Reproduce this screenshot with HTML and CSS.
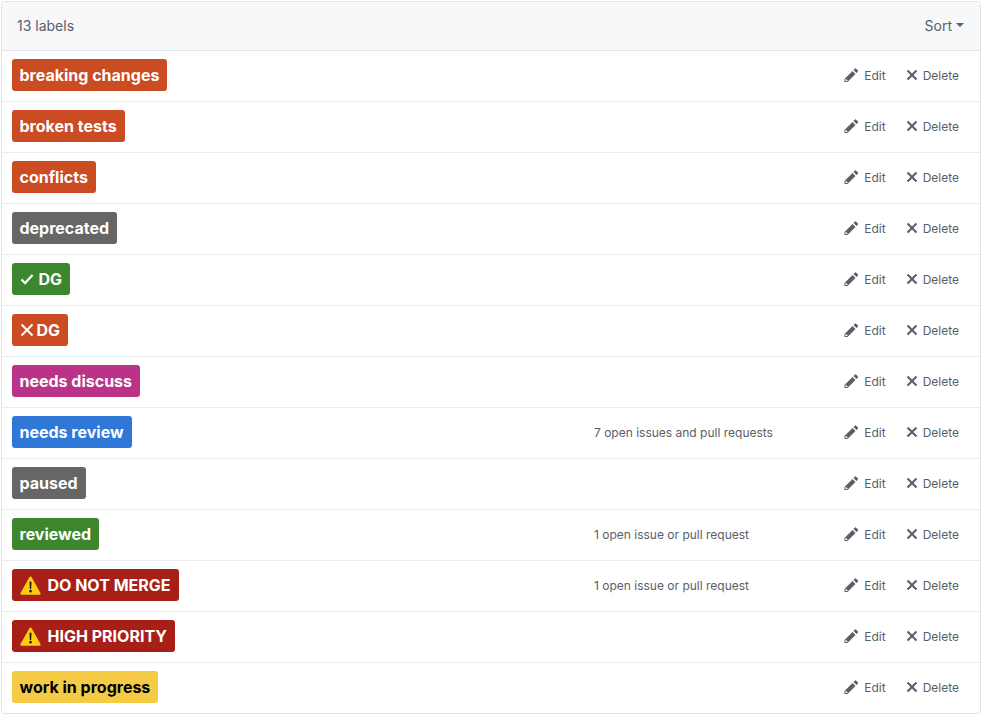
FILE: index.html
```html
<!DOCTYPE html>
<html lang="en">
<head>
    <meta charset="UTF-8">
    <title>Labels</title>
    <link rel="stylesheet" href="styles.css">
</head>
<body>
<svg class="defs" aria-hidden="true">
    <symbol id="pencil" viewBox="0 0 14 16"><path fill-rule="evenodd" d="M0 12v3h3l8-8-3-3-8 8zm3 2H1v-2h1v1h1v1zm10.3-9.3L12 6 9 3l1.3-1.3a.996.996 0 0 1 1.41 0l1.59 1.59c.39.39.39 1.02 0 1.41z"/></symbol>
    <symbol id="cross" viewBox="0 0 12 16"><path fill-rule="evenodd" d="M7.48 8l3.75 3.75-1.48 1.48L6 9.48l-3.75 3.75-1.48-1.48L4.52 8 .77 4.25l1.48-1.48L6 6.52l3.75-3.75 1.48 1.48L7.48 8z"/></symbol>
    <symbol id="warning" viewBox="0 0 22 20"><path fill="#ffcd0f" d="M11 .6c.5 0 .9.3 1.2.8l9.3 16.4c.5.9-.1 1.9-1.1 1.9H1.6c-1 0-1.6-1-1.1-1.9L9.8 1.4c.3-.5.7-.8 1.2-.8z"/><path fill="#1b1b1b" d="M9.9 6h2.2l-.4 7.6h-1.4zM11 14.6a1.4 1.4 0 1 1 0 2.8 1.4 1.4 0 0 1 0-2.8z"/></symbol>
</svg>
<div class="box">
    <div class="box-header">
        <span>13 labels</span>
        <span class="sort">Sort <i class="caret"></i></span>
    </div>
    <div class="row">
        <div><span class="label orange">breaking changes</span></div>
        <div class="issues"></div>
        <div class="actions">
            <a><svg class="ico-edit"><use href="#pencil"/></svg>Edit</a>
            <a><svg class="ico-del"><use href="#cross"/></svg>Delete</a>
        </div>
    </div>
    <div class="row">
        <div><span class="label orange">broken tests</span></div>
        <div class="issues"></div>
        <div class="actions">
            <a><svg class="ico-edit"><use href="#pencil"/></svg>Edit</a>
            <a><svg class="ico-del"><use href="#cross"/></svg>Delete</a>
        </div>
    </div>
    <div class="row">
        <div><span class="label orange">conflicts</span></div>
        <div class="issues"></div>
        <div class="actions">
            <a><svg class="ico-edit"><use href="#pencil"/></svg>Edit</a>
            <a><svg class="ico-del"><use href="#cross"/></svg>Delete</a>
        </div>
    </div>
    <div class="row">
        <div><span class="label grey">deprecated</span></div>
        <div class="issues"></div>
        <div class="actions">
            <a><svg class="ico-edit"><use href="#pencil"/></svg>Edit</a>
            <a><svg class="ico-del"><use href="#cross"/></svg>Delete</a>
        </div>
    </div>
    <div class="row">
        <div><span class="label green"><svg class="mark-check" viewBox="0 0 14 12"><path d="M1.5 6.5l3.6 3.6 7.4-8" fill="none" stroke="#fff" stroke-width="2.2"/></svg>DG</span></div>
        <div class="issues"></div>
        <div class="actions">
            <a><svg class="ico-edit"><use href="#pencil"/></svg>Edit</a>
            <a><svg class="ico-del"><use href="#cross"/></svg>Delete</a>
        </div>
    </div>
    <div class="row">
        <div><span class="label orange"><svg class="mark-cross" viewBox="0 0 14 14"><path d="M1.5 1.5l11 11M12.5 1.5l-11 11" fill="none" stroke="#fff" stroke-width="2"/></svg>DG</span></div>
        <div class="issues"></div>
        <div class="actions">
            <a><svg class="ico-edit"><use href="#pencil"/></svg>Edit</a>
            <a><svg class="ico-del"><use href="#cross"/></svg>Delete</a>
        </div>
    </div>
    <div class="row">
        <div><span class="label magenta">needs discuss</span></div>
        <div class="issues"></div>
        <div class="actions">
            <a><svg class="ico-edit"><use href="#pencil"/></svg>Edit</a>
            <a><svg class="ico-del"><use href="#cross"/></svg>Delete</a>
        </div>
    </div>
    <div class="row">
        <div><span class="label blue">needs review</span></div>
        <div class="issues">7 open issues and pull requests</div>
        <div class="actions">
            <a><svg class="ico-edit"><use href="#pencil"/></svg>Edit</a>
            <a><svg class="ico-del"><use href="#cross"/></svg>Delete</a>
        </div>
    </div>
    <div class="row">
        <div><span class="label grey">paused</span></div>
        <div class="issues"></div>
        <div class="actions">
            <a><svg class="ico-edit"><use href="#pencil"/></svg>Edit</a>
            <a><svg class="ico-del"><use href="#cross"/></svg>Delete</a>
        </div>
    </div>
    <div class="row">
        <div><span class="label green">reviewed</span></div>
        <div class="issues">1 open issue or pull request</div>
        <div class="actions">
            <a><svg class="ico-edit"><use href="#pencil"/></svg>Edit</a>
            <a><svg class="ico-del"><use href="#cross"/></svg>Delete</a>
        </div>
    </div>
    <div class="row">
        <div><span class="label red"><svg class="mark-warn"><use href="#warning"/></svg>DO NOT MERGE</span></div>
        <div class="issues">1 open issue or pull request</div>
        <div class="actions">
            <a><svg class="ico-edit"><use href="#pencil"/></svg>Edit</a>
            <a><svg class="ico-del"><use href="#cross"/></svg>Delete</a>
        </div>
    </div>
    <div class="row">
        <div><span class="label red"><svg class="mark-warn"><use href="#warning"/></svg>HIGH PRIORITY</span></div>
        <div class="issues"></div>
        <div class="actions">
            <a><svg class="ico-edit"><use href="#pencil"/></svg>Edit</a>
            <a><svg class="ico-del"><use href="#cross"/></svg>Delete</a>
        </div>
    </div>
    <div class="row">
        <div><span class="label yellow">work in progress</span></div>
        <div class="issues"></div>
        <div class="actions">
            <a><svg class="ico-edit"><use href="#pencil"/></svg>Edit</a>
            <a><svg class="ico-del"><use href="#cross"/></svg>Delete</a>
        </div>
    </div>
</div>
</body>
</html>
```

FILE: styles.css
```css
body {
    font-family: Inter, "Liberation Sans", sans-serif;
    color: #586069;
    margin: 1px;
    background: #fff;
}

.defs {
    display: none;
}

.box {
    border: 1px solid #e1e4e8;
    border-radius: 3px;
}

.box-header {
    display: flex;
    justify-content: space-between;
    align-items: center;
    height: 46px;
    padding: 0 16px 2px 15px;
    font-size: 14px;
    background: #f6f8fa;
    border-bottom: 1px solid #e1e4e8;
}

.sort {
    display: flex;
    align-items: center;
    gap: 4px;
}

.caret {
    border: 4px solid transparent;
    border-top-color: #586069;
    border-bottom: 0;
}

.row {
    display: grid;
    grid-template-columns: 582px 1fr auto;
    align-items: center;
    height: 48px;
    padding: 0 21px 2px 10px;
    border-bottom: 1px solid #eaecef;
}

.row:last-child {
    border-bottom: 0;
}

.label {
    display: inline-flex;
    align-items: center;
    height: 32px;
    padding: 0 8px 0 7.5px;
    font-size: 16px;
    font-weight: 700;
    color: #fff;
    border-radius: 3px;
}

.orange { background: #cb4b23; }
.grey { background: #666666; }
.green { background: #3c862e; }
.magenta { background: #bb3388; }
.blue { background: #2f78d8; }
.red { background: #a81f17; }
.yellow { background: #f5cb46; color: #000; }

.mark-check {
    width: 14px;
    height: 12px;
    margin-right: 5px;
}

.mark-cross {
    width: 14px;
    height: 14px;
    margin-right: 3px;
}

.mark-warn {
    width: 21px;
    height: 19px;
    margin-right: 7px;
}

.issues {
    font-size: 12px;
}

.actions {
    display: flex;
    gap: 20px;
    font-size: 12px;
}

.actions a {
    display: flex;
    align-items: center;
}

.actions svg {
    height: 16px;
    fill: #586069;
    margin-right: 5px;
}

.ico-edit {
    width: 15px;
}

.ico-del {
    width: 12px;
}
```
